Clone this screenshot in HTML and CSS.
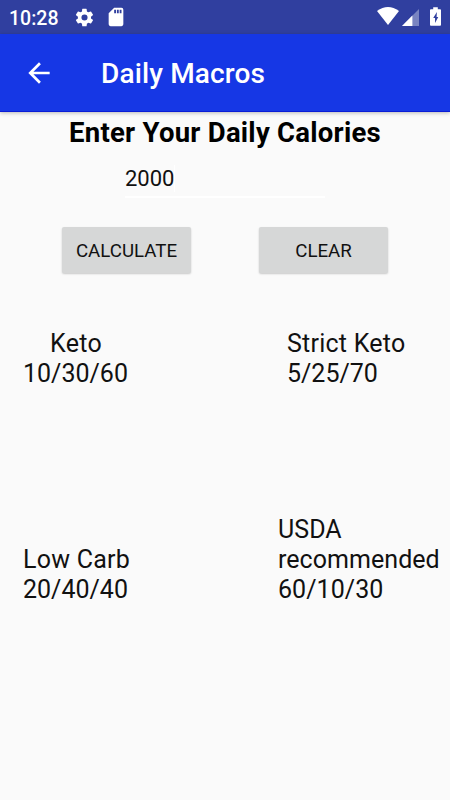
FILE: index.html
```html
<!DOCTYPE html>
<html lang="en">
<head>
<meta charset="utf-8">
<title>Daily Macros</title>
<link rel="stylesheet" href="styles.css">
</head>
<body>
<header class="status">
  <span class="clock">10:28</span>
  <svg class="gear" viewBox="0 0 24 24"><path d="M19.4 13a7.500 7.500 0 0 0 0-2l2.100-1.600a.5.5 0 0 0 .1-.7l-2-3.400a.5.5 0 0 0-.6-.2l-2.500 1a7.300 7.300 0 0 0-1.700-1L14.400 2.400a.5.5 0 0 0-.5-.4h-4a.5.5 0 0 0-.5.4L9.100 5.100a7.300 7.300 0 0 0-1.700 1l-2.500-1a.5.5 0 0 0-.6.2l-2 3.400a.5.5 0 0 0 .1.700L4.500 11a7.500 7.500 0 0 0 0 2l-2.100 1.600a.5.5 0 0 0-.1.700l2 3.400c.1.200.4.3.6.2l2.500-1a7.300 7.300 0 0 0 1.700 1l.3 2.700c0 .2.200.4.5.4h4c.3 0 .5-.2.5-.4l.4-2.700a7.300 7.300 0 0 0 1.700-1l2.500 1c.2.1.5 0 .6-.2l2-3.400a.5.5 0 0 0-.1-.7zM12 15.500a3.500 3.500 0 1 1 0-7 3.500 3.500 0 0 1 0 7z"/></svg>
  <svg class="card" viewBox="0 0 24 24"><path d="M18 2h-8L4 8v12a2 2 0 0 0 2 2h12a2 2 0 0 0 2-2V4a2 2 0 0 0-2-2zm-6 6h-2V4h2zm3 0h-2V4h2zm3 0h-2V4h2z"/></svg>
  <svg class="wifi" viewBox="0 0 22 18"><path d="M0 4Q11-4 22 4L11 18z"/></svg>
  <svg class="signal" viewBox="0 0 18 18"><path class="dim" d="M18 0v18H0z"/><path d="M11 7v11H0z"/></svg>
  <svg class="battery" viewBox="0 0 12 20"><path fill-rule="evenodd" d="M3.500 0h5v2H11q1 0 1 1v16q0 1-1 1H1q-1 0-1-1V3q0-1 1-1h2.500zM7.500 5 3.500 11.500h2V17l3.500-6.500H7.200z"/></svg>
</header>
<nav class="bar">
  <svg class="back" viewBox="0 0 24 24"><path d="M20 11H7.830l5.590-5.590L12 4l-8 8 8 8 1.410-1.410L7.830 13H20z"/></svg>
  <h1>Daily Macros</h1>
</nav>
<main>
  <h2>Enter Your Daily Calories</h2>
  <div class="field"><span class="value">2000</span></div>
  <div class="buttons"><button>CALCULATE</button><button>CLEAR</button></div>
  <section class="plans">
    <div class="plan keto"><span class="indent">Keto</span><br>10/30/60</div>
    <div class="plan strict"><span class="name">Strict Keto</span><br>5/25/70</div>
    <div class="plan low"><span class="name">Low Carb</span><br>20/40/40</div>
    <div class="plan usda">USDA<br>recommended<br>60/10/30</div>
  </section>
</main>
</body>
</html>
```
FILE: styles.css
```css
body { margin: 0; height: 800px; overflow: hidden; background: #fafafa; color: #111; font-family: Roboto, sans-serif; }
svg { display: block; fill: #fff; flex: none; }
.status { height: 34px; background: #303f9f; display: flex; align-items: center; box-sizing: border-box; padding-left: 9px; }
.clock { width: 65px; color: #fff; font-size: 19.500px; font-weight: 500; padding-top: 2px; }
.gear { width: 21px; height: 21px; }
.card { width: 22px; height: 22px; margin-left: 10px; }
.wifi { width: 22px; height: 18px; margin-left: auto; margin-top: -2px; }
.signal { width: 17px; height: 17px; margin-left: 3px; }
.dim { fill: #7984c1; }
.battery { width: 11px; height: 19px; margin: -2px 9px 0 11px; }
.bar { height: 78px; box-sizing: border-box; border-bottom: 1px solid #0a1cd6; background: #1637e5; display: flex; align-items: center; box-shadow: 0 1px 4px #0004; }
.back { width: 32px; height: 32px; margin: 0 46px 0 23px; }
h1 { margin: 0; padding-top: 2px; color: #fff; font-size: 28px; font-weight: 500; letter-spacing: .15px; }
h2 { margin: 0; padding-top: 5px; text-align: center; font-size: 27.500px; line-height: 32px; font-weight: 700; letter-spacing: .25px; color: #000; }
.field { width: 200px; height: 49px; box-sizing: border-box; margin: 0 auto; padding-top: 16px; border-bottom: 2px solid #fff; font-size: 22px; line-height: 27px; }
.value { display: inline-block; border-right: 1px solid #fff; }
.buttons { display: flex; justify-content: space-between; padding: 29px 61px 0 62px; }
button { width: 129px; height: 46px; padding: 0; border: 0; border-radius: 2px; background: #d6d7d7; box-shadow: 0 1px 2px #0003; color: #111; font: 450 18.700px/48px Roboto, sans-serif; }
.buttons button + button { margin-right: 1px; }
.plans { display: grid; grid-template-columns: 255px 1fr; grid-template-rows: 60px 216px; padding: 56px 0 0 23px; }
.plan { font-size: 25px; line-height: 30px; align-self: end; }
.name { letter-spacing: .23px; }
.indent { margin-left: 27px; letter-spacing: .3px; }
.strict { padding-left: 9px; }
.usda { letter-spacing: .05px; }
```
